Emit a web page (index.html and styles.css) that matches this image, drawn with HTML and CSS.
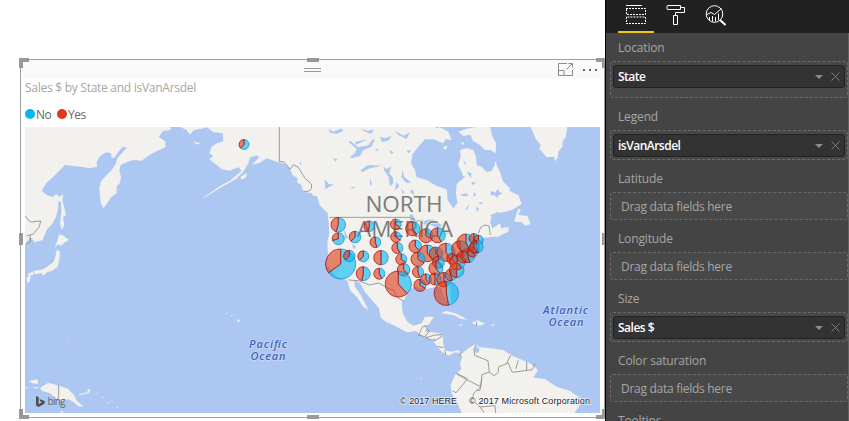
FILE: index.html
```
<!DOCTYPE html>
<html lang="en">
<head>
<meta charset="utf-8">
<title>Sales by State</title>
<link rel="stylesheet" href="styles.css">
</head>
<body>
<main class="canvas">
  <section class="visual">
    <header class="visual-bar">
      <span class="grip"></span>
      <svg class="focus" width="16" height="13" viewBox="0 0 16 13"><path d="M9 .5H.5v12h14V7M.5 7.500h5.500v5M8.500 6.500L14 1M10.500.500h4v4"/></svg>
      <span class="more"><i></i><i></i><i></i></span>
    </header>
    <h1 class="title">Sales $ by State and isVanArsdel</h1>
    <div class="legend"><i class="dot no"></i><span class="key-no">No</span><i class="dot yes"></i><span class="key-yes">Yes</span></div>
    <svg class="map" width="575" height="286" viewBox="25 127 575 286">
      <g transform="translate(0 50) scale(.33333)">
        <g class="land">
          <path d="M75 231H510L513 240 490 243 476 260 497 275 496 292 478 300 463 307 445 317 425 332 400 330 375 338 362 345 358 362 363 380 360 398 350 410 350 430 335 440 320 462 310 475 303 460 300 440 298 415 302 395 315 380 335 360 348 340 352 325 365 310 381 293 368 291 355 305 345 322 335 325 333 310 318 307 300 318 290 335 292 350 270 355 240 350 215 347 195 345 180 360 160 380 140 398 125 422 140 435 158 441 168 432 178 440 190 432 187 450 192 470 198 495 189 502 193 525 185 540 180 520 184 490 183 456 175 453 175 475 168 500 158 520 140 540 128 570 105 577 90 560 75 585Z"/>
          <path d="M540 231L560 240 570 254 582 240 605 236 625 231ZM578 274l22 6-8 4zM458 255l10 2-10 3z"/>
          <path d="M620 231L640 247 668 250 670 274 650 280 635 290 628 310 640 318 628 328 650 345 665 358 690 362 715 352 725 362 710 375 690 392 660 408 635 425 604 448 618 440 650 420 680 403 708 387 730 365 745 340 750 322 770 316 778 322 755 345 780 338 800 325 830 335 855 342 870 358 878 375 892 385 897 402 905 400V231ZM722 380l20-12-4 14-14 8z"/>
        </g>
        <g transform="translate(900 0)">
          <path class="land" d="M-2 231H408L405 268 375 268 355 290 338 312 333 340 345 360 350 382 380 390 410 408 440 418 443 450 460 475 472 460 468 430 470 402 490 385 485 365 474 345 482 320 480 300 500 294 520 300 528 320 530 345 545 350 560 366 575 362 584 345 586 332 592 350 600 365 606 385 610 395 630 415 628 422 655 435 665 462 652 470 635 480 602 488 575 500 570 520 578 535 600 520 604 535 625 530 598 560H88L86 515 75 495 52 475 45 450 35 430 10 425 2 400-8 400Z"/>
          <path class="land" d="M405 236L420 232 445 245 455 270 436 268 430 280 415 274 402 268ZM475 245L500 236 530 231H570L578 262 588 280 587 310 572 300 555 300 540 285 518 272 512 254 490 258ZM428 292l14-5-4 13zM482 280l10-4-2 10z"/>
          <path class="land" d="M692 231H802L797 262 788 272 787 290 775 305 774 322 766 334 762 320 740 322 718 296 722 285 706 265ZM642 515L655 475 662 480 655 495 682 498 692 522 676 527 664 516ZM578 560l14-10 18-6 18-12-4 14-20 8z"/>
          <g class="water">
            <path d="M85 236l15 9 25-10 5 8-20 8-20-3zM182 235l20 8 18-4-5 12-20-6zM150 320l15-10 5-14-25-20 5-4 25 20 30-6 15-20 4 4-10 20-24 10-10 18-25 7zM240 260l15 5 20-8-10 15-20 4zM165 276l38-8-35 16zM285 242l25 15 20-10-10 20-25-12zM182 360l22-15 42 2-36 8-24 12zM250 350l10 8 14-10-6 22 10 12 2 16-10 12-4-30-12-16zM210 385l6 18-6 4zM74 388l12 14 16 2-14 6-12 8zM150 411h16l-4 5zM308 360l4 20 22 18-16 0-14-16zM290 395l8 14-14 12zM0 332l4 10-4 5zM100 325l12 2-6 8zM320 300l15 2-10 8zM303 415l10 12-4 6zM335 418l8 8-2 8-10-8zM270 300l12 8-10 4zM225 300l12-6-6 10z"/>
            <path d="M500 365l14 4 0 16-8-10zM478 435l20-5 8 6-12 3zM522 425l6 10-8 6zM535 458l14-2-6 8zM572 422l14 6 8-12 4 10 10 4-12 6-6 8-6-8-12 0zM490 330l8 10-4 4zM510 458l-8 20-8 2zM622 498l-28-12-22 8 0 6 24-2 10 6 14-2zM484 376l12 4-12 6zM514 396l14 2-10 8zM528 470l10 6-8 10z"/>
            <path d="M328 495l10-2 8 18-8 2zM362 522l16-12 22-2 26 18-12 8-22-8zM408 535l8 20 0 60-12-12 0-45zM430 534l15 12 14 22-10 10-14-24zM440 603l32-12 0 6-28 16zM478 583l22-8 3 6-22 5z"/>
          </g>
          <g class="water"><path d="M0 410l10 16 25 35-8 4-27-40zM25 436l28 52 32 22-2-20-24-24-8-28z"/></g>
        </g>
        <g class="land" transform="translate(0 555)">
          <path d="M178-2L190 2 207 14 192 24 183 32 174 28 164 38 170 22ZM170 45L180 48 178 75 172 97 155 108 140 112 130 122 125 114 104 118 100 108 130 103 145 92 160 82 166 65ZM80 126L92 122 90 138 82 145ZM84 116l14-6 4 8-16 6zM75 20l10-8 2-12-12 0z"/>
          <path d="M120 458L145 443 178 452 205 462 222 480 230 497 252 515 235 514 220 500 205 493 180 500 165 488 150 475 125 467ZM86 438L112 433 114 447 98 445ZM235 478L262 472 264 462 272 464 266 474 240 481ZM98 457l22-2-14 6zM180 532l6-6 4 8zM78 455l8 2-10 4zM711 252l9 4-6 8zM678 234h3v3h-3zM693 240h4v2h-4zM204 308h3v3h-3zM288 470l10 8-8-4zM303 484l10 6-8-2zM322 500l8 4-6 0zM335 488l2 14-2-4zM350 516h4v4h-4z"/>
        </g>
        <g transform="translate(900 555)">
          <path class="land" d="M88-4L82 20 84 60 80 90 110 125 135 132 143 140 150 165 170 185 190 215 206 226 195 205 182 180 165 155 162 135 180 145 196 172 215 195 237 220 242 248 260 262 290 275 320 292 348 288 370 305 400 318 410 332 425 350 445 362 465 352 478 354 487 366 480 385 484 402 465 420 452 450 455 475 475 510 487 538H820L837 515 842 490 810 468 770 455 735 432 700 428 714 405 690 385 655 370 632 360 610 345 570 340 535 335 530 325 505 340 485 356 475 345 455 350 435 346 430 330 429 310 432 298 400 292 375 290 385 270 402 245 375 245 365 265 340 272 322 260 308 235 305 205 315 190 325 165 345 155 380 162 410 155 425 160 430 180 445 208 455 208 452 180 450 150 470 125 490 100 494 75 510 55 530 45 545 10 570 6 600-4Z"/>
          <path class="land" d="M422 234L440 228 470 236 504 254 484 252 462 241ZM515 264L532 256 556 266 536 272ZM474 270l14-2-4 5zM568 270l16-2-2 4zM628 356h5v5h-5zM362 428h4v3h-4z"/>
          <path class="water" d="M522 345l8-12 8 8-2 12-10 0zM130-22l14 30-8 4zM154 25l14 10-6 8zM400 308l8 5-6 4z"/>
        </g>
        <g class="border">
          <path d="M75 497L90 516 122 513 118 530 100 552 80 558M90 555l2 20-14 7M176 1005v35l-4 8 6 4"/>
          <path d="M838 231V334L852 336 870 358 880 344 895 352 915 385 934 402 935 416 925 424 910 424M988 502H1233V510L1242 505 1246 514 1270 510M1435 550L1442 532 1455 525 1467 528 1471 555"/>
          <g transform="translate(900 555)"><path d="M145 135L175 137 208 150 236 144 260 158 280 165 290 185 312 200M355 302L368 275 386 272M357 300l17 5 14-16-14-18M375 310l28-10 28-1M375 302l10 10 20 5 24-15M412 334l18 4M435 346l2 14M482 352l-3 12M530 325l-8 18 2 18 40 16 4 34-22 8-4 36-40-20-32-18M568 412l15 10 12-10 0-16 30-12 8 20 4 8 60-8 8-18M632 360l-12 25M655 376l-8 26M680 380v28M470 415l32 16-18 24-16 18-10-5M540 458l-20 18 0 20 20 20 45-4 2 22M540 516l14 20M530 260v12M546 430l-6 36-10 0"/></g>
        </g>
      </g>
      <text class="continent" x="365.500" y="212.200" textLength="77">NORTH</text>
      <text class="continent" x="357" y="237" textLength="96">AMERICA</text>
      <text class="ocean" x="249" y="348" textLength="38">Pacific</text>
      <text class="ocean" x="250.500" y="360" textLength="35">Ocean</text>
      <text class="ocean" x="543" y="314" textLength="45">Atlantic</text>
      <text class="ocean" x="548.500" y="326" textLength="35">Ocean</text>
      <g id="pies"></g>
      <path class="bing" d="M36 396l2.700 1v7.200l3.200-2-1.500-.800-1-2.400 5.200 1.900v2.500L38.700 407 36 405.500z"/>
      <text class="bing-name" x="47.500" y="405" textLength="18">bing</text>
      <text class="credit" x="400" y="404" textLength="57">© 2017 HERE</text>
      <text class="credit" x="469" y="404" textLength="121">© 2017 Microsoft Corporation</text>
    </svg>
    <b class="h tl"></b><b class="h tr"></b><b class="h bl"></b><b class="h br"></b>
    <b class="h t"></b><b class="h b"></b><b class="h l"></b><b class="h r"></b>
  </section>
</main>
<aside class="panel">
  <nav class="tabs">
    <span class="tab active"><svg width="22" height="20" viewBox="0 0 22 20"><path d="M1 .500h16"/><path stroke-dasharray="2 1" d="M1.500 4v5.500h19V3.500H1M1.500 12v6.500h19v-6.500H1"/></svg></span>
    <span class="tab"><svg width="20" height="20" viewBox="0 0 20 20"><path d="M2 .500h12.500v4H2a1 1 0 0 1-1-1v-2a1 1 0 0 1 1-1zM14.500 2.500h4v5h-9v3M7.500 10.500h4v9h-4z"/></svg></span>
    <span class="tab"><svg width="22" height="21" viewBox="0 0 22 21"><circle cx="9.500" cy="9" r="8.300"/><path stroke-width="2" d="M15 15l5.500 5"/><path d="M2 9.500l4-2 3.500 2 7-6M4.500 15v-3M7.500 16.500V11M10.500 16.500V12M13.500 15V8.500"/></svg></span>
  </nav>
  <div class="fields">
    <label class="name">Location</label>
    <div class="well roomy"><div class="chip">State<i class="caret"></i><svg class="x" width="9" height="9"><path d="M.500.500l8 8M8.500.500l-8 8"/></svg></div></div>
    <label class="name">Legend</label>
    <div class="well"><div class="chip">isVanArsdel<i class="caret"></i><svg class="x" width="9" height="9"><path d="M.500.500l8 8M8.500.500l-8 8"/></svg></div></div>
    <label class="name">Latitude</label>
    <div class="well empty">Drag data fields here</div>
    <label class="name">Longitude</label>
    <div class="well empty">Drag data fields here</div>
    <label class="name">Size</label>
    <div class="well"><div class="chip">Sales $<i class="caret"></i><svg class="x" width="9" height="9"><path d="M.500.500l8 8M8.500.500l-8 8"/></svg></div></div>
    <label class="name">Color saturation</label>
    <div class="well empty">Drag data fields here</div>
    <label class="name">Tooltips</label>
  </div>
</aside>
<script src="pies.js"></script>
</body>
</html>
```
FILE: styles.css
```
* { box-sizing: border-box; }
body { margin: 0; width: 849px; height: 421px; overflow: hidden; display: flex; background: #fff; font: 12px "Open Sans", "Noto Sans", sans-serif; }
.canvas { width: 605px; padding: 59px 0 0 20px; }
.visual { position: relative; width: 585px; height: 359px; border: 1px solid #a0a0a0; }
.visual-bar { height: 19px; background: #fafafa; display: flex; align-items: center; }
.grip { width: 17px; height: 4px; margin: 0 237px 0 283px; border: solid #999; border-width: 1px 0; }
.focus { fill: none; stroke: #8a8a8a; }
.more { display: flex; gap: 4px; margin-left: 9px; }
.more i { width: 2px; height: 2px; background: #666; }
.title { margin: 0 0 0 4px; height: 18px; line-height: 18px; font-size: 12px; font-weight: 400; color: #a6a6a6; letter-spacing: -.27px; white-space: nowrap; }
.legend { height: 30px; padding: 4px 0 0 4px; display: flex; align-items: center; color: #666; letter-spacing: -.45px; }
.dot { width: 10px; height: 10px; border-radius: 50%; margin-right: 1px; }
.no { background: #01b8f5; }
.yes { background: #dd3a17; }
.key-no { width: 21px; }
.map { display: block; margin-left: 4px; background: #abc7f2; }
.land { fill: #f2f1ed; }
.water { fill: #abc7f2; }
.border { fill: none; stroke: #8e8e8c; stroke-width: 2.6; }
.continent { font-size: 22.5px; fill: #7c7c7c; stroke: #f2f1ed; stroke-width: 1.5px; paint-order: stroke; }
.ocean { font-size: 11px; font-style: italic; font-weight: 600; fill: #4263b8; stroke: #c8daf7; stroke-width: 1.5px; paint-order: stroke; }
.credit { font: 9px "Liberation Sans", sans-serif; fill: #222; stroke: #ffffffb0; stroke-width: 1.500px; paint-order: stroke; }
.bing { fill: #4d4d4d; }
.bing-name { font-size: 10px; fill: #666; }
.slice-no { fill: #01b8f5; fill-opacity: .6; stroke: #0a8bc4; stroke-width: .7; }
.slice-yes { fill: #dd3a17; fill-opacity: .6; stroke: #a81212; stroke-width: .8; }
.h { position: absolute; background: #999; }
.t, .b { left: 286px; width: 12px; height: 4px; }
.t { top: -2px; } .b { bottom: -2px; }
.l, .r { top: 173px; height: 12px; width: 4px; }
.l { left: -2px; } .r { right: -1px; width: 3px; }
.tl, .tr, .bl, .br { width: 10px; height: 10px; background: none; border: 0 solid #999; }
.tl { left: -2px; top: -2px; border-width: 4px 0 0 4px; }
.tr { right: -1px; top: -2px; width: 9px; border-width: 4px 3px 0 0; }
.bl { left: -2px; bottom: -2px; border-width: 0 0 4px 4px; }
.br { right: -1px; bottom: -2px; width: 9px; border-width: 0 3px 4px 0; }
.panel { width: 244px; height: 421px; background: #444; border-left: 1px solid #000; overflow: hidden; }
.tabs { height: 33px; background: #212121; display: flex; gap: 4px; padding-left: 12px; }
.tab { width: 36px; height: 33px; padding-top: 5px; display: flex; justify-content: center; align-items: flex-start; border-bottom: 2px solid transparent; }
.active { border-color: #f2c811; }
.tab svg { fill: none; stroke: #fff; }
.fields { border-right: 1px solid #606060; padding: 0 0 0 4px; height: 388px; }
.name { display: block; height: 32px; padding: 6px 0 0 8px; line-height: 26px; color: #a6a6a6; letter-spacing: -.15px; }
.name:first-child { height: 28px; padding-top: 2px; }
.well { height: 30px; border: 1px dashed #6a6a6a; border-radius: 3px; padding: 3px 2px; background: #484848; }
.roomy { height: 37px; }
.empty { height: 28px; padding: 0 0 0 10px; line-height: 27px; color: #a6a6a6; letter-spacing: -.28px; }
.chip { height: 23px; border: 1px solid #222; border-radius: 3px; background: #333; color: #fff; font-weight: 600; letter-spacing: -.5px; display: flex; align-items: center; padding: 0 4px; }
.caret { margin-left: auto; border: 4px solid transparent; border-top-color: #8c8c8c; border-bottom: 0; }
.x { margin-left: 8px; stroke: #7c7c7c; }
```
FILE: pies.js
```
// [x, y, radius, share of "No"]
const states = [
  [244,144.5,5,.62],[338.3,224.7,7.3,.55],[338.3,238.7,6,.7],[340.7,264,15,.65],[349.3,256,5.7,.62],
  [355,237,5.8,.62],[369.3,226.3,5.3,.53],[375.3,242.3,5.3,.45],[363.3,256.3,5.5,.62],[381,257.7,7.2,.5],
  [363.3,273.7,7,.53],[379.3,273.7,5.5,.42],[395.7,224.3,5.3,.35],[396,237,5.3,.35],[397.3,248,5.5,.42],
  [401.3,259.3,5.5,.35],[403.7,269.7,6.3,.38],[398.3,284,13,.38],[412.7,228.7,7,.4],[426,235.7,7,.33],
  [437.7,235.3,7.5,.42],[415.3,246.3,6.3,.38],[427.3,253.3,8.3,.38],[436,253.7,6.7,.35],[446,252.3,9,.42],
  [418,259.3,7,.33],[418,272,5.5,.45],[438.3,262.3,6,.4],[436,268.3,7,.4],[420,285.3,6,.33],
  [426,279.3,5.5,.4],[435,279,6,.5],[444,279.7,7.3,.45],[446.3,293.3,12.2,.47],[450.7,275,5.7,.45],
  [456.7,270.3,7.3,.5],[452.3,258.7,5.5,.4],[457.3,262.3,7.5,.4],[460,249,8.3,.4],[463,257,6,.4],
  [467.7,255.7,7,.45],[466,243,9,.42],[472.5,252,5,.4],[474,238.5,5,.4],[478.5,240,4.8,.5],
  [476.500,246.500,6.5,.45],[474,248,5,.4]
];
const at = (x, y, r, f) => [x + r * Math.sin(f * 2 * Math.PI), y - r * Math.cos(f * 2 * Math.PI)].map(n => n.toFixed(2)).join(" ");
const slice = (x, y, r, a, b, name) =>
  `<path class="${name}" d="M${x} ${y}L${at(x, y, r, a)}A${r} ${r} 0 ${b - a > .5 ? 1 : 0} 1 ${at(x, y, r, b)}Z"/>`;
document.getElementById("pies").innerHTML = states.map(([x, y, r, f]) =>
  slice(x, y, r, 0, f, "slice-no") + slice(x, y, r, f, 1, "slice-yes")).join("");
```
